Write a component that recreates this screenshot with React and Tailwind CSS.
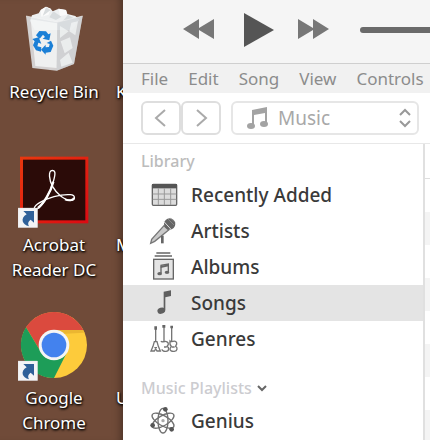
import React, { useState } from 'react';
import { clsx } from 'clsx';

const ShortcutBadge = ({ y }) => (
  <g transform={`translate(54 ${y})`}>
    <rect width="59" height="59" fill="#f3f4f6" stroke="#d6d3d1" strokeWidth="1" />
    <path d="M16 9h32v35l-10-9c-8 6-9 11-5 20C12 51 6 30 26 19Z" fill="#2f6099" />
  </g>
);

const RecycleBinIcon = () => (
  <svg viewBox="54 0 216 240" className="w-18 h-20" aria-hidden="true">
    <path d="M90 62 96 46 116 40 122 30 138 20 152 26 158 34 176 26 198 30 202 42 226 48 238 60 216 90H104Z" fill="#eef0f1" />
    <path d="m122 30 16-10 14 6-6 18-22 6Z" fill="#fbfbfb" />
    <path d="m176 26 22 4 4 14-22 4Z" fill="#fafafa" />
    <path d="m138 22-10 26 24-18M160 34l24 16-16 10-20-8ZM204 44l-16 20 36-8Z" fill="#d8dcde" />
    <path d="M78 48 174 66 248 48 222 192 170 212 97 204Z" fill="#e3e6e9" fillOpacity=".86" />
    <path d="m92 58 80 12-2 134-64-6Z" fill="#f6f7f8" fillOpacity=".8" />
    <path d="m172 66 76-18-26 144-52 20Z" fill="#cdd2d6" fillOpacity=".55" />
    <path d="m180 78 26 16-26 20Zm34-10 20-4-8 42-18-12Zm-32 56 28-12 8 32-24 16Zm-2 56 26-22 12 30-34 12Z" fill="#f3f5f6" fillOpacity=".75" />
    <path d="m78 48 96 18 74-18" fill="none" stroke="#f7f7f7" strokeWidth="2" strokeOpacity=".8" />
    <g fill="#1b7fd6">
      <path d="m108 106 10-13 20 1 7 9 7-3-4 21-20-5 7-5-6-7-10 12Z" />
      <path d="m97 117 19-5 8 19-9-3-3 11 12 3-1 13-15-4-9-15 5-12Z" />
      <path d="m153 122 7 15-8 19-15 2v6l-14-15 14-15v8l10-1 2-9-9-3Z" />
    </g>
  </svg>
);

const AcrobatIcon = () => (
  <svg viewBox="54 39 216 240" className="w-18 h-20" aria-hidden="true">
    <defs>
      <linearGradient id="acrobat-frame" x1="0" y1="0" x2="1" y2="1">
        <stop offset="0" stopColor="#e8380f" />
        <stop offset="1" stopColor="#dc0a12" />
      </linearGradient>
    </defs>
    <rect x="60" y="50" width="205" height="200" fill="url(#acrobat-frame)" />
    <rect x="69" y="59" width="187" height="182" fill="#2b0b08" />
    <path
      d="M157 91C144 92 147 120 158 140C170 162 194 181 213 181C227 180 227 165 211 164C180 162 142 174 119 188C99 200 98 213 112 206C130 196 151 158 161 121C167 100 166 91 157 91Z"
      fill="none"
      stroke="#fff"
      strokeWidth="4"
    />
    <path d="M160 125C152 156 132 190 114 204" fill="none" stroke="#fff" strokeWidth="7" />
    <path d="M195 178c10 5 26 4 27-5" fill="none" stroke="#fff" strokeWidth="6" />
    <ShortcutBadge y={204} />
  </svg>
);

const ChromeIcon = () => (
  <svg viewBox="54 18 216 240" className="w-18 h-20" aria-hidden="true">
    <circle cx="162" cy="135" r="99" fill="#fdcb3b" />
    <path d="M162 90h88l2 8-70 4Z" fill="#e0a92b" fillOpacity=".6" />
    <path d="M78 82A99 99 0 0 1 250 90H162A45 45 0 0 0 123 157Z" fill="#db4a3e" />
    <path d="M78 82 123 157A45 45 0 0 0 201 157L162 234A99 99 0 0 1 78 82Z" fill="#1d9d58" />
    <circle cx="162" cy="135" r="46" fill="#f5f5f5" />
    <circle cx="162" cy="135" r="37" fill="#4382ee" />
    <ShortcutBadge y={183} />
  </svg>
);

const RecentIcon = () => (
  <svg viewBox="81 96 96 108" className="w-8 h-9" aria-hidden="true">
    <rect x="97" y="118" width="73" height="63" rx="3" fill="#dcdcdc" stroke="#666" strokeWidth="4" />
    <path d="M96 117h75v13H96z" fill="#555" />
    <path d="M98 147h71M98 163h71M115 130v50M133 130v50M152 130v50" stroke="#999" strokeWidth="3" />
  </svg>
);

const ArtistsIcon = () => (
  <svg viewBox="81 204 96 108" className="w-8 h-9" aria-hidden="true">
    <path d="m132 242 14 13-42 34-12 6 3-12Z" fill="#c9c9c9" stroke="#777" strokeWidth="4" />
    <path d="M127 272v23" stroke="#666" strokeWidth="8" />
    <circle cx="149" cy="237" r="17" fill="#666" />
    <path d="m132 230 22 24" stroke="#ddd" strokeWidth="3" />
    <path d="m144 222 18 18M152 220l14 12" stroke="#999" strokeWidth="2" />
  </svg>
);

const AlbumsIcon = () => (
  <svg viewBox="81 312 96 108" className="w-8 h-9" aria-hidden="true">
    <path d="M109 324h42M104 333h52" stroke="#666" strokeWidth="4" />
    <rect x="101" y="343" width="59" height="59" fill="#e4e4e4" stroke="#666" strokeWidth="4" />
    <path d="M123 385v-24l22-4v24" fill="none" stroke="#666" strokeWidth="4" />
    <path d="m122 363 24-5v6l-24 5Z" fill="#666" />
    <ellipse cx="119" cy="386" rx="7" ry="5" fill="#666" />
    <ellipse cx="141" cy="382" rx="7" ry="5" fill="#666" />
  </svg>
);

const SongsIcon = () => (
  <svg viewBox="81 0 96 108" className="w-8 h-9" aria-hidden="true">
    <path d="m131 20 22-4v17l-17 4v37h-5Z" fill="#5f5f5f" />
    <ellipse cx="124" cy="77" rx="12" ry="9" transform="rotate(-20 124 77)" fill="#5f5f5f" />
  </svg>
);

const GenresIcon = () => (
  <svg viewBox="81 108 96 108" className="w-8 h-9" aria-hidden="true">
    <g fill="none" stroke="#757575" strokeWidth="4">
      <path d="M107 126v44M132 122v50M155 124v46" />
      <path d="m103 170-4 14-6 14h10l4-6 4 6h10l-6-14-4-14Z" />
      <path d="M123 168c2 4 4 2 8 2 8-2 14 1 14 7 0 4-3 5-4 7 7 3 7 14-3 15-7 1-12-2-12-6" />
      <path d="M150 168c3 3 5 2 9 1 8-2 12 2 11 8-1 4-3 5-3 7 6 3 6 14-4 15-8 1-13-2-13-7 0-4 4-5 4-8-4-3-5-8-4-16Z" />
      <path d="M103 188h8M132 186h8M156 186h8" />
    </g>
    <path d="M103 124h8v10h-8zM127 120h9v8h-9zM151 122h8v8h-8z" fill="#666" />
  </svg>
);

const GeniusIcon = () => (
  <svg viewBox="81 354 96 108" className="w-8 h-9" aria-hidden="true">
    <g fill="none" stroke="#707070" strokeWidth="4">
      <ellipse cx="129" cy="407" rx="15" ry="37" />
      <ellipse cx="129" cy="407" rx="15" ry="37" transform="rotate(60 129 407)" />
      <ellipse cx="129" cy="407" rx="15" ry="37" transform="rotate(-60 129 407)" />
    </g>
    <circle cx="129" cy="407" r="5" fill="#aaa" />
    <circle cx="136" cy="373" r="7" fill="#555" />
    <circle cx="98" cy="421" r="7" fill="#555" />
    <circle cx="155" cy="433" r="7" fill="#555" />
  </svg>
);

const desktopItems = [
  { name: 'Recycle Bin', Icon: RecycleBinIcon },
  { name: 'Acrobat Reader DC', Icon: AcrobatIcon },
  { name: 'Google Chrome', Icon: ChromeIcon },
];

// second desktop column, mostly covered by the player window
const coveredLabels = ['K', 'M', 'U'];

const menus = ['File', 'Edit', 'Song', 'View', 'Controls'];

const libraryItems = [
  { name: 'Recently Added', Icon: RecentIcon },
  { name: 'Artists', Icon: ArtistsIcon },
  { name: 'Albums', Icon: AlbumsIcon },
  { name: 'Songs', Icon: SongsIcon },
  { name: 'Genres', Icon: GenresIcon },
];

const Desktop = () => (
  <div className="flex w-[123px] shrink-0 overflow-hidden bg-[#704b39] text-[17px] leading-[25px] text-white [text-shadow:1px_1px_2px_#000,0_1px_3px_#000] shadow-[inset_-8px_0_8px_-6px_rgba(0,0,0,0.35)]">
    <div className="w-[108px] shrink-0">
      {desktopItems.map(({ name, Icon }) => (
        <a key={name} href="#" className="flex h-[153px] flex-col items-center text-center">
          <Icon />
          <span className="-mt-px px-2">{name}</span>
        </a>
      ))}
    </div>
    <div className="shrink-0 pl-2">
      {coveredLabels.map((label) => (
        <div key={label} className="h-[153px] pt-[79px]">{label}</div>
      ))}
    </div>
  </div>
);

const PlayerBar = () => (
  <div className="flex h-16 shrink-0 items-center gap-6 border-b border-[#cfcfcf] bg-[#f5f5f5] pb-1 pl-[59px]">
    <button type="button" aria-label="Previous">
      <svg viewBox="0 0 34 36" className="h-9 w-[34px]">
        <path d="M1 17 17 7v9l15-9v20l-15-9v9Z" fill="#777" />
      </svg>
    </button>
    <button type="button" aria-label="Play">
      <svg viewBox="0 0 34 36" className="h-9 w-[34px]">
        <path d="M4 1 34 18 4 35Z" fill="#555" />
      </svg>
    </button>
    <button type="button" aria-label="Next">
      <svg viewBox="0 0 34 36" className="h-9 w-[34px]">
        <path d="M0 7l15 9V7l16 10-16 10v-9L0 27Z" fill="#777" />
      </svg>
    </button>
    <input
      type="range"
      aria-label="Volume"
      defaultValue="100"
      className="ml-1 h-[6px] min-w-0 flex-1 appearance-none rounded-l-full bg-[#6a6a6a] [&::-webkit-slider-thumb]:size-0 [&::-webkit-slider-thumb]:appearance-none"
    />
  </div>
);

const NavBar = () => (
  <div className="flex shrink-0 border-b border-[#e8e8e8] py-2 pl-[18px] pr-[11px]">
    <button type="button" aria-label="Back" className="flex h-[34px] w-10 items-center justify-center rounded-md border-2 border-[#dedede]">
      <svg viewBox="0 0 16 20" className="h-5 w-4" fill="none" stroke="#aaa" strokeWidth="2">
        <path d="M12 2 3 10l9 8" />
      </svg>
    </button>
    <button type="button" aria-label="Forward" className="flex h-[34px] w-10 items-center justify-center rounded-md border-2 border-[#dedede]">
      <svg viewBox="0 0 16 20" className="h-5 w-4" fill="none" stroke="#aaa" strokeWidth="2">
        <path d="m4 2 9 8-9 8" />
      </svg>
    </button>
    <div className="relative ml-[10px] flex-1">
      <select aria-label="Media type" className="h-[34px] w-full appearance-none rounded-md border-2 border-[#e6e6e6] bg-white pl-[45px] text-[19px] leading-6 text-[#a8a8a8]">
        <option>Music</option>
      </select>
      <svg viewBox="0 0 22 24" className="pointer-events-none absolute left-4 top-[5px] h-6 w-[22px]" fill="#a3a3a3">
        <path d="M5 4 20 1v17h-2V7L7 9v11H5Z" />
        <ellipse cx="4" cy="20" rx="4" ry="3" />
        <ellipse cx="17" cy="18" rx="4" ry="3" />
      </svg>
      <svg viewBox="0 0 14 20" className="pointer-events-none absolute right-[7px] top-[7px] h-5 w-[14px]" fill="none" stroke="#999" strokeWidth="2">
        <path d="m2 7 5-5 5 5M2 13l5 5 5-5" />
      </svg>
    </div>
  </div>
);

const SidebarItem = ({ name, Icon, active, onClick }) => (
  <button
    type="button"
    onClick={onClick}
    className={clsx(
      'flex h-9 w-full items-center gap-3 pl-6 text-left text-[19px] font-medium text-[#3a3a3a]',
      active && 'bg-[#e4e4e4]'
    )}
  >
    <Icon />
    {name}
  </button>
);

const App = () => {
  const [selected, setSelected] = useState('Songs');

  return (
    <div className="flex h-screen overflow-hidden font-['Noto_Sans','Open_Sans',sans-serif]">
      <Desktop />

      <main className="flex min-w-0 flex-1 flex-col overflow-hidden bg-white">
        <PlayerBar />

        {/* Menu bar */}
        <nav className="flex h-[29px] shrink-0 items-center gap-5 bg-[#f1f1f1] pl-[18px] text-[17px] text-[#8c8c8c]">
          {menus.map((menu) => (
            <button key={menu} type="button">{menu}</button>
          ))}
        </nav>

        <NavBar />

        <div className="flex min-h-0 flex-1">
          {/* Sidebar */}
          <aside className="w-[302px] shrink-0 border-r-2 border-[#e0e0e0]">
            <h2 className="flex h-[33px] items-center pl-[18px] text-base font-medium text-[#bcbcbc]">Library</h2>
            {libraryItems.map((item) => (
              <SidebarItem
                key={item.name}
                {...item}
                active={selected === item.name}
                onClick={() => setSelected(item.name)}
              />
            ))}
            <h2 className="mt-[15px] h-[31px] pl-[18px] text-base font-medium text-[#ccccd0]">
              <button type="button" className="flex h-full items-center gap-1">
                Music Playlists
                <svg viewBox="0 0 12 10" className="h-[10px] w-3" fill="none" stroke="#666" strokeWidth="2">
                  <path d="m2 3 4 4 4-4" />
                </svg>
              </button>
            </h2>
            <SidebarItem
              name="Genius"
              Icon={GeniusIcon}
              active={selected === 'Genius'}
              onClick={() => setSelected('Genius')}
            />
          </aside>

          {/* Track list */}
          <div className="flex-1 overflow-hidden">
            <div className="h-[35px] border-b border-[#dedede]" />
            {[0, 1, 2, 3, 4, 5, 6, 7].map((row) => (
              <div key={row} className="h-[33px] odd:bg-[#f4f4f4]" />
            ))}
          </div>
        </div>
      </main>
    </div>
  );
};

export default App;
